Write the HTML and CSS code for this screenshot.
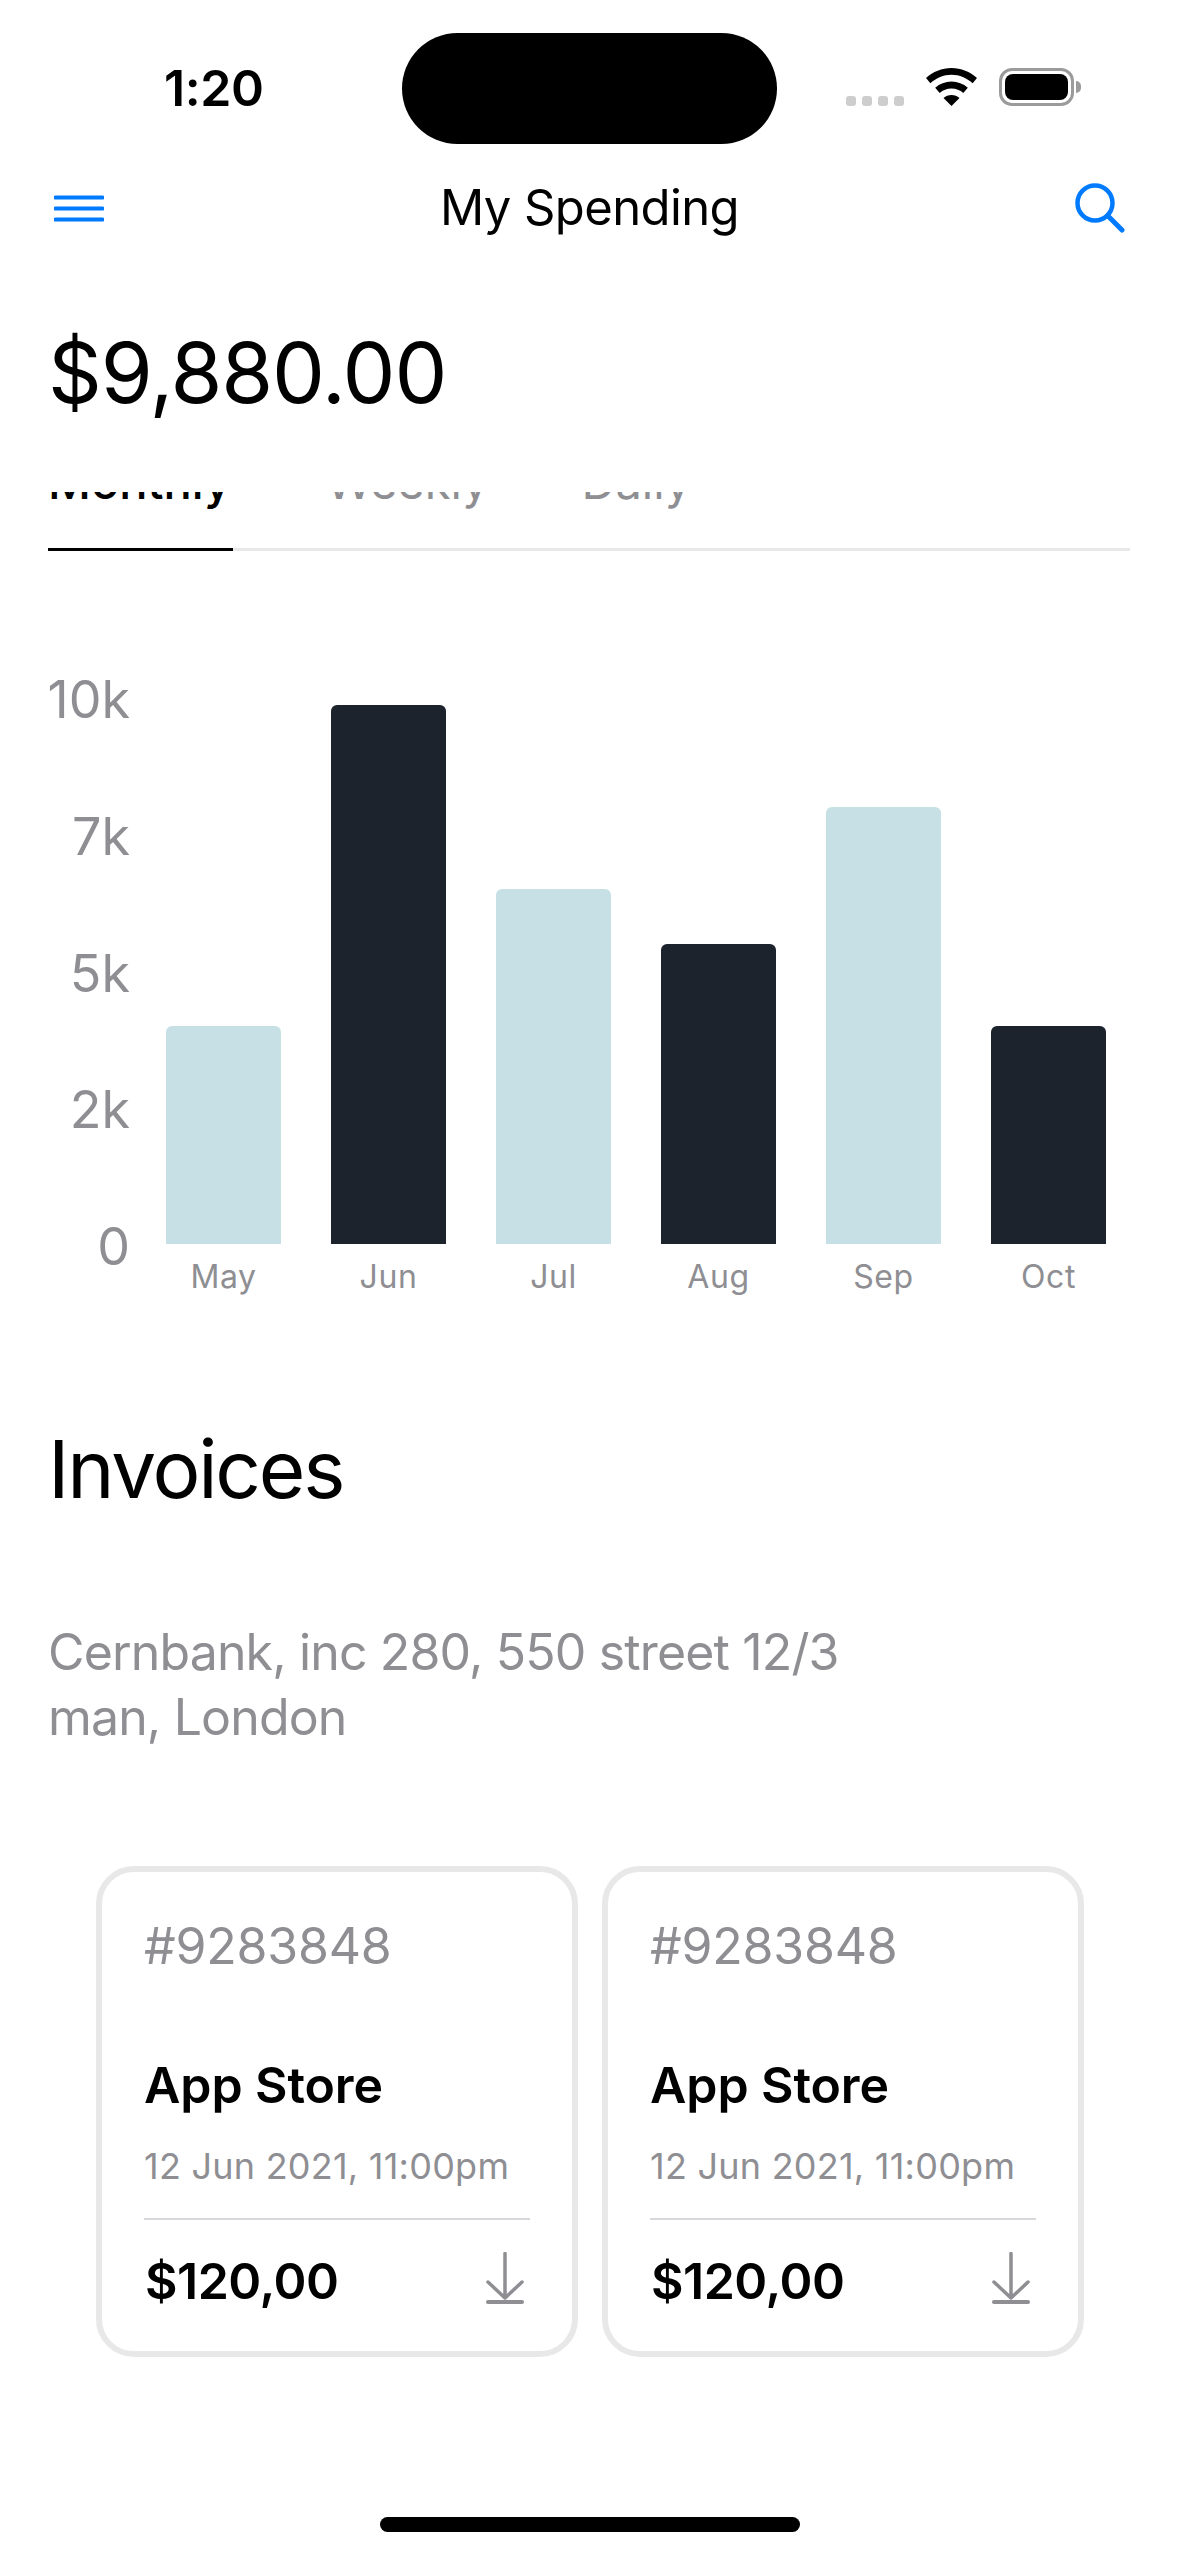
FILE: index.html
```html
<!DOCTYPE html>
<html lang="en">
<head>
<meta charset="utf-8">
<title>My Spending</title>
<link rel="stylesheet" href="styles.css">
</head>
<body>
<div class="screen">
  <header class="status">
    <span class="time">1:20</span>
    <div class="island"></div>
    <div class="status-icons">
      <div class="dots"><i></i><i></i><i></i><i></i></div>
      <svg class="wifi" width="51" height="38" viewBox="0 0 51 38"><path d="M25.5 0C15.8 0 7 3.7 0 10l4.4 5.2C10.3 10 17.500 6.800 25.500 6.800S40.700 10 46.600 15.200L51 10C44 3.700 35.200 0 25.500 0Z"/><path d="M25.500 13.500c-6.200 0-11.800 2.300-16.300 6.200l4.500 5.300c3.200-2.700 7.300-4.400 11.800-4.400s8.600 1.700 11.800 4.400l4.500-5.300c-4.500-3.900-10.100-6.200-16.300-6.200Z"/><path d="M25.500 27c-3 0-5.800 1.100-8 3l8 8 8-8c-2.200-1.900-5-3-8-3Z"/></svg>
      <div class="battery"><div class="battery-body"><div class="battery-fill"></div></div><div class="battery-cap"></div></div>
    </div>
  </header>
  <nav class="nav">
    <svg class="menu" width="50" height="27" viewBox="0 0 50 27"><path d="M1.500 2.500h47M1.500 13.500h47M1.500 24.500h47" stroke="#007aff" stroke-width="4" stroke-linecap="round" fill="none"/></svg>
    <h1 class="title">My Spending</h1>
    <svg class="search" width="50" height="50" viewBox="0 0 50 50"><circle cx="20" cy="20" r="17.500" stroke="#007aff" stroke-width="4.500" fill="none"/><path d="M33 33l14 14" stroke="#007aff" stroke-width="5" stroke-linecap="round"/></svg>
  </nav>
  <div class="balance">$9,880.00</div>
  <div class="tabs">
    <div class="tab active">Monthly</div>
    <div class="tab">Weekly</div>
    <div class="tab">Daily</div>
  </div>
  <section class="chart">
    <div class="axis">
      <span>10k</span><span>7k</span><span>5k</span><span>2k</span><span>0</span>
    </div>
    <div class="plot">
      <div class="col"><div class="bar light" style="height:218px"></div><span class="month">May</span></div>
      <div class="col"><div class="bar dark" style="height:539px"></div><span class="month">Jun</span></div>
      <div class="col"><div class="bar light" style="height:355px"></div><span class="month">Jul</span></div>
      <div class="col"><div class="bar dark" style="height:300px"></div><span class="month">Aug</span></div>
      <div class="col"><div class="bar light" style="height:437px"></div><span class="month">Sep</span></div>
      <div class="col"><div class="bar dark" style="height:218px"></div><span class="month">Oct</span></div>
    </div>
  </section>
  <h2 class="heading">Invoices</h2>
  <p class="address">Cernbank, inc 280, 550 street 12/3<br>man, London</p>
  <section class="cards">
    <article class="card">
      <div class="num">#9283848</div>
      <div class="store">App Store</div>
      <div class="date">12 Jun 2021, 11:00pm</div>
      <div class="foot">
        <span class="price">$120,00</span>
        <svg class="dl" width="38" height="52" viewBox="0 0 38 52"><path d="M19 1.500V46M2 30l17 16 17-16" stroke="#8e8e93" stroke-width="3.500" stroke-linecap="round" stroke-linejoin="round" fill="none"/><path d="M2 50h34" stroke="#8e8e93" stroke-width="4" stroke-linecap="round"/></svg>
      </div>
    </article>
    <article class="card">
      <div class="num">#9283848</div>
      <div class="store">App Store</div>
      <div class="date">12 Jun 2021, 11:00pm</div>
      <div class="foot">
        <span class="price">$120,00</span>
        <svg class="dl" width="38" height="52" viewBox="0 0 38 52"><path d="M19 1.500V46M2 30l17 16 17-16" stroke="#8e8e93" stroke-width="3.500" stroke-linecap="round" stroke-linejoin="round" fill="none"/><path d="M2 50h34" stroke="#8e8e93" stroke-width="4" stroke-linecap="round"/></svg>
      </div>
    </article>
  </section>
  <div class="home-row"><div class="home"></div></div>
</div>
</body>
</html>
```
FILE: styles.css
```css
* { box-sizing: border-box; }
html, body { margin: 0; padding: 0; background: #fff; }
body { font-family: Inter, "Noto Sans", sans-serif; color: #000; }
.screen { width: 1179px; height: 2556px; overflow: hidden; display: flex; flex-direction: column; }

.status { height: 144px; padding-top: 33px; display: grid; grid-template-columns: 402px 375px 1fr; }
.time { font-size: 50px; font-weight: 600; line-height: 57px; padding: 27px 0 0 164px; letter-spacing: -0.4px; }
.island { height: 111px; background: #000; border-radius: 56px; }
.status-icons { display: flex; align-items: flex-end; padding: 36px 0 0 69px; height: 73px; }
.dots { display: flex; gap: 6px; margin-right: 22px; }
.dots i { width: 10px; height: 10px; background: #cdcdcd; border-radius: 3px; display: block; }
.wifi { margin-right: 22px; }
.battery { display: flex; align-items: center; }
.battery-body { width: 75px; height: 38px; border: 3px solid #9b9b9b; border-radius: 13px; padding: 3px; }
.battery-fill { width: 100%; height: 100%; background: #000; border-radius: 8px; }
.battery-cap { width: 5px; height: 12px; margin-left: 2px; background: #9b9b9b; border-radius: 0 5px 5px 0; }

.nav { height: 128px; padding: 0 54px; display: flex; align-items: center; justify-content: space-between; }
.menu { flex: none; }
.title { margin: 0; font-size: 49px; font-weight: 400; letter-spacing: -0.6px; line-height: 60px; }
.search { flex: none; }

.balance { font-size: 84px; line-height: 100px; padding: 51px 0 0 48px; letter-spacing: -1.2px; }

.tabs { margin: 69px 49px 0 48px; height: 59px; flex: none; overflow: hidden; display: flex; align-items: flex-start; gap: 93px; box-shadow: inset 0 -3px 0 #e8e8e8; }
.tab { flex: none; font-size: 47px; line-height: 50px; margin-top: -35px; color: #8e8e93; }
.tab.active { color: #000; font-weight: 500; width: 185px; height: 94px; border-bottom: 3px solid #000; }

.chart { height: 870px; flex: none; padding-top: 125px; display: flex; }
.axis { width: 130px; height: 591px; margin-top: 2px; display: flex; flex-direction: column; justify-content: space-between; align-items: flex-end; color: #8e8e93; font-size: 52px; line-height: 44px; }
.plot { margin-left: 36px; display: flex; gap: 50px; height: 568px; align-items: flex-end; }
.col { width: 115px; display: flex; flex-direction: column; align-items: center; height: 540px; justify-content: flex-end; position: relative; }
.bar { width: 115px; border-radius: 6px 6px 0 0; flex: none; }
.light { background: #c7e0e6; }
.dark { background: #1d232c; }
.month { position: absolute; top: 100%; margin-top: 14px; font-size: 32px; line-height: 38px; color: #8e8e93; letter-spacing: 0.6px; }

.heading { margin: 0; font-size: 80px; font-weight: 400; line-height: 96px; padding-left: 48px; letter-spacing: -2.2px; }
.address { margin: 103px 0 0; padding-left: 48px; font-size: 50px; line-height: 65px; color: #8e8e93; letter-spacing: -0.85px; }

.cards { display: flex; gap: 24px; padding-left: 96px; margin-top: 116px; }
.card { width: 482px; height: 491px; border: 6px solid #e8e8e8; border-radius: 38px; padding: 44px 42px 0; }
.num { font-size: 50px; line-height: 60px; color: #8e8e93; letter-spacing: -0.2px; }
.store { margin-top: 79px; font-size: 50px; font-weight: 600; line-height: 60px; letter-spacing: -0.1px; }
.date { margin-top: 29px; font-size: 36px; line-height: 44px; color: #8e8e93; letter-spacing: 0.24px; }
.foot { margin-top: 30px; border-top: 2px solid #d8d8dc; display: flex; justify-content: space-between; align-items: flex-start; padding: 32px 6px 0 1px; }
.price { font-size: 50px; font-weight: 600; line-height: 58px; letter-spacing: -0.5px; }
.dl { flex: none; }

.home-row { margin-top: auto; height: 39px; flex: none; display: flex; justify-content: center; }
.home { width: 420px; height: 15px; background: #000; border-radius: 8px; }
```
